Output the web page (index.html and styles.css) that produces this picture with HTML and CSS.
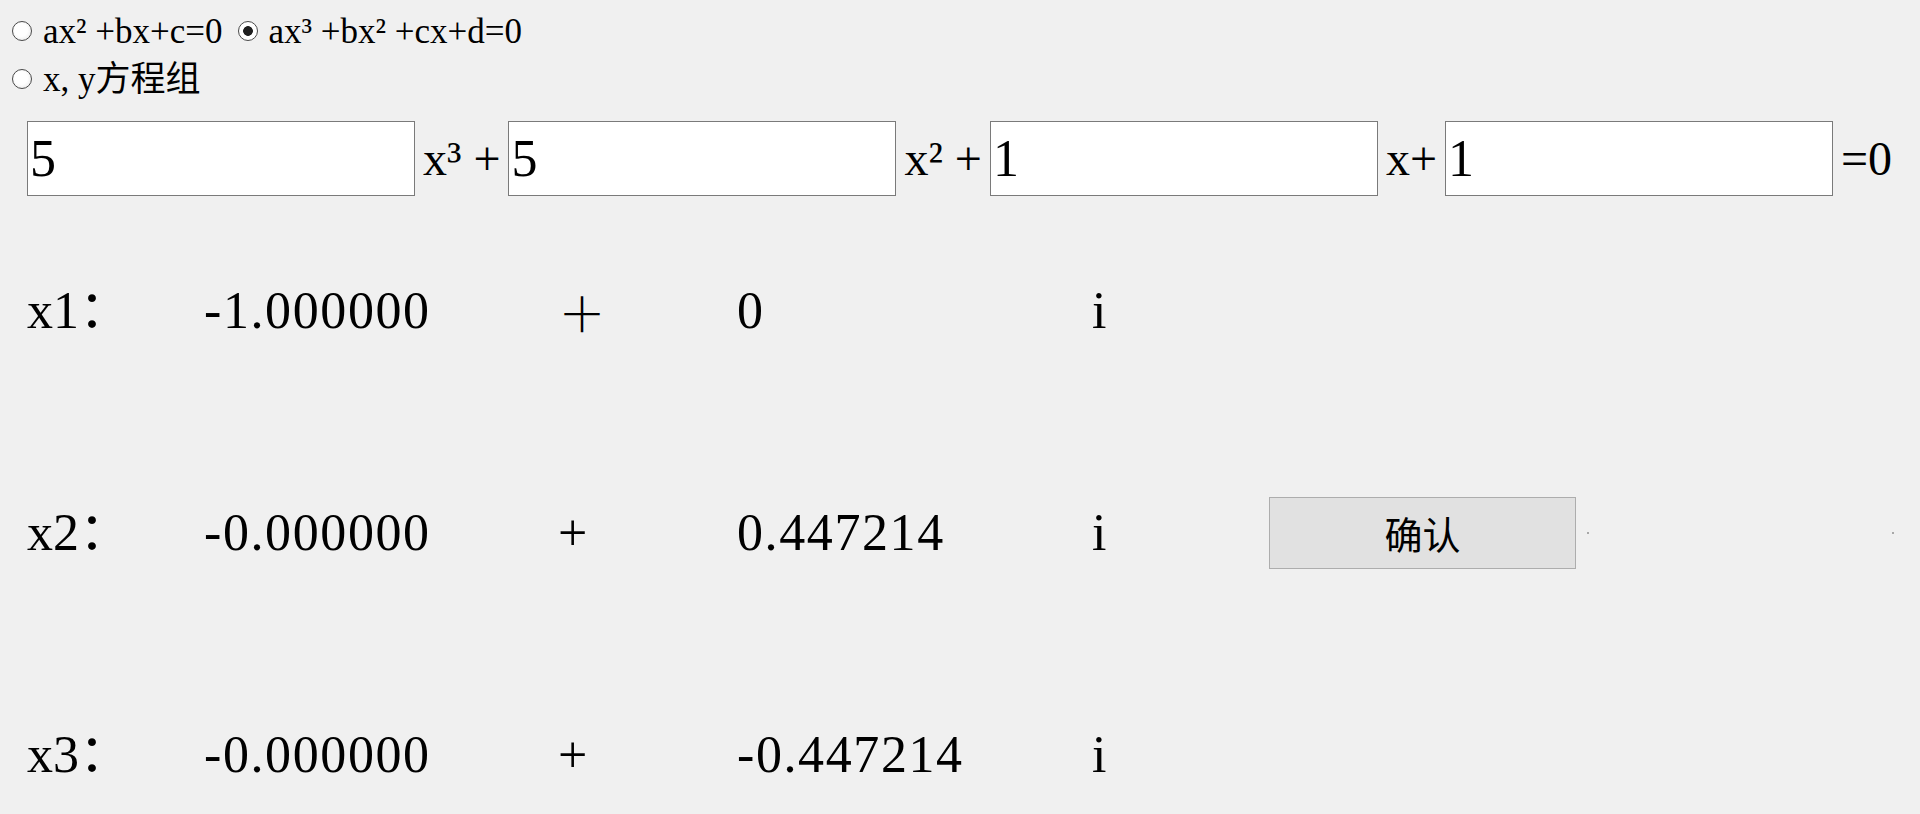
FILE: index.html
```html
<!DOCTYPE html>
<html lang="zh">
<head>
<meta charset="utf-8">
<title>方程求解</title>
<link rel="stylesheet" href="styles.css">
</head>
<body>
<div class="app">
  <div class="modes">
    <div class="mode-row">
      <label class="mode"><input type="radio" name="mode" class="radio"><span>ax² +bx+c=0</span></label>
      <label class="mode"><input type="radio" name="mode" class="radio" checked><span>ax³ +bx² +cx+d=0</span></label>
    </div>
    <div class="mode-row">
      <label class="mode"><input type="radio" name="mode" class="radio"><span>x, y方程组</span></label>
    </div>
  </div>

  <div class="equation">
    <input class="coef" type="text" value="5">
    <span class="term">x³ +</span>
    <input class="coef" type="text" value="5">
    <span class="term">x² +</span>
    <input class="coef" type="text" value="1">
    <span class="term">x+</span>
    <input class="coef" type="text" value="1">
    <span class="term">=0</span>
  </div>

  <div class="results">
    <div class="result-row">
      <span class="name">x1：</span>
      <span class="num">-1.000000</span>
      <span class="op op-wide">＋</span>
      <span class="num">0</span>
      <span class="unit">i</span>
    </div>
    <div class="result-row">
      <span class="name">x2：</span>
      <span class="num">-0.000000</span>
      <span class="op">+</span>
      <span class="num">0.447214</span>
      <span class="unit">i</span>
      <button class="confirm" type="button">确认</button>
      <span class="dots"><span class="dot"></span><span class="dot"></span></span>
    </div>
    <div class="result-row">
      <span class="name">x3：</span>
      <span class="num">-0.000000</span>
      <span class="op">+</span>
      <span class="num">-0.447214</span>
      <span class="unit">i</span>
    </div>
  </div>
</div>
</body>
</html>
```

FILE: styles.css
```css
html, body {
  margin: 0;
  height: 100%;
  overflow: hidden;
  background: #f0f0f0;
}

body {
  font-family: "Liberation Serif", "Noto Sans CJK SC", serif;
  color: #000;
}

.modes {
  padding-top: 7px;
}

.mode-row {
  display: flex;
  align-items: center;
  height: 48px;
  padding-left: 12px;
}

.mode {
  display: flex;
  align-items: center;
  gap: 11px;
  margin-right: 15px;
  font-size: 35px;
  line-height: 1;
}

.radio {
  appearance: none;
  -webkit-appearance: none;
  box-sizing: border-box;
  width: 20px;
  height: 20px;
  margin: 0;
  border: 1px solid #4a4a4a;
  border-radius: 50%;
  background: radial-gradient(circle at 45% 45%, #ffffff 45%, #e2e2e2 100%);
}

.radio:checked {
  background: radial-gradient(circle, #1e1e1e 0 4.5px, #ffffff 5.2px);
}

.equation {
  display: flex;
  align-items: center;
  height: 75px;
  margin-top: 18px;
  padding-left: 27px;
}

.coef {
  box-sizing: border-box;
  width: 388px;
  height: 75px;
  margin: 0;
  padding: 0 2px;
  border: 1px solid #7a7a7a;
  border-radius: 0;
  background: #fff;
  color: #000;
  font-family: "Liberation Serif", serif;
  font-size: 52px;
  outline: none;
}

.term {
  padding: 0 8px;
  font-size: 48px;
  line-height: 1;
  white-space: pre;
}

.results {
  margin-top: 4px;
  padding-left: 27px;
}

.result-row {
  display: grid;
  grid-template-columns: 177px 354px 179px 355px 177px 307px 1fr;
  align-items: center;
  height: 222px;
  font-size: 52px;
  line-height: 1;
}

.num {
  letter-spacing: 1.6px;
}

.op-wide {
  font-family: "Noto Sans CJK SC", sans-serif;
  font-size: 48px;
  font-weight: 300;
}

.confirm {
  box-sizing: border-box;
  width: 307px;
  height: 72px;
  padding: 0;
  border: 1px solid #adadad;
  border-radius: 0;
  background: #e1e1e1;
  color: #000;
  font-family: "Noto Sans CJK SC", sans-serif;
  font-size: 38px;
  line-height: 1;
}

.dots {
  display: flex;
  align-items: center;
  gap: 303px;
  padding-left: 11px;
}

.dot {
  width: 2px;
  height: 2px;
  background: #a8a8a8;
}
```
